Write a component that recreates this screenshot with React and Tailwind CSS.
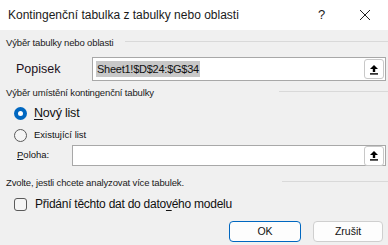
import React from 'react'

function PickButton(){
  return (
    <div className="w-[20px] h-[20px] bg-white border border-[#c8c8c8] rounded-[3px] flex items-center justify-center">
      <svg width="10" height="11" viewBox="0 0 10 11">
        <path d="M5 1 L9 5 H6.2 V8 H3.8 V5 H1 Z" fill="#000" />
        <rect x="1" y="9.2" width="8" height="1.4" fill="#000" />
      </svg>
    </div>
  )
}

function SectionLabel({text, lineStart}){
  return (
    <div className="relative h-[12px] flex items-center">
      <span className="text-[9.5px] leading-[12px] tracking-[-0.15px] text-[#1a1a1a] pl-[6px]">{text}</span>
      <div className="absolute right-0 top-[4px] h-px bg-[#d9d9d9]" style={{left: lineStart}} />
    </div>
  )
}

export default function App(){
  return (
    <div className="w-[388px] h-[245px] bg-[#f0f0f0] overflow-hidden relative" style={{fontFamily:'"Liberation Sans", Arial, sans-serif'}}>
      <div className="h-[30px] bg-white flex items-center pl-[8px] text-[#1a1a1a]">
        <span className="text-[12px] flex-1">Kontingenční tabulka z tabulky nebo oblasti</span>
        <span className="text-[13px] w-[10px] mr-[31px]">?</span>
        <svg width="12" height="12" viewBox="0 0 12 12" className="mr-[17px]">
          <path d="M1 1 L11 11 M11 1 L1 11" stroke="#222" strokeWidth="1" />
        </svg>
      </div>

      <div className="mt-[7px]">
        <SectionLabel text="Výběr tabulky nebo oblasti" lineStart={125} />
      </div>

      <div className="mt-[8px] flex items-center h-[24px]">
        <span className="pl-[16px] w-[92px] text-[12.5px] text-[#1c1020]">Popisek</span>
        <div className="flex-1 mr-[2px] h-[24px] bg-white border border-[#a8a8a8] flex items-center pl-[3px] pr-[1px]">
          <span className="bg-[#c8c8c8] text-[11px] tracking-[-0.25px] leading-[16px] text-[#111] px-px flex-none">Sheet1!$D$24:$G$34</span>
          <div className="flex-1" />
          <PickButton />
        </div>
      </div>

      <div className="mt-[6px]">
        <SectionLabel text="Výběr umístění kontingenční tabulky" lineStart={279} />
      </div>

      <div className="mt-[6px] flex items-center h-[16px] pl-[14px]">
        <div className="w-[13px] h-[13px] rounded-full bg-[#0067c0] flex items-center justify-center">
          <div className="w-[5px] h-[5px] rounded-full bg-white" />
        </div>
        <span className="ml-[7px] text-[12.5px] tracking-[-0.2px] text-[#111]"><span className="underline underline-offset-2">N</span>ový list</span>
      </div>

      <div className="mt-[6px] flex items-center h-[16px] pl-[14px]">
        <div className="w-[13px] h-[13px] rounded-full border border-[#5a5a5a] bg-[#f5f5f5]" />
        <span className="ml-[7px] text-[9.5px] text-[#111]">Existující list</span>
      </div>

      <div className="mt-[2px] flex items-center h-[21px]">
        <span className="pl-[17px] w-[72px] text-[9.5px] text-[#111]"><span className="underline">P</span>oloha:</span>
        <div className="flex-1 mr-[2px] h-[21px] bg-white border border-[#a8a8a8] flex items-center justify-end pr-[1px]">
          <PickButton />
        </div>
      </div>

      <div className="mt-[11px]">
        <SectionLabel text="Zvolte, jestli chcete analyzovat více tabulek." lineStart={282} />
      </div>

      <div className="mt-[7px] flex items-center h-[16px] pl-[14px]">
        <div className="w-[13px] h-[13px] rounded-[3px] border border-[#5a5a5a] bg-[#f5f5f5]" />
        <span className="ml-[8px] text-[12px] tracking-[-0.25px] text-[#111]">Přidání těchto dat do dato<span className="underline underline-offset-2">v</span>ého modelu</span>
      </div>

      <div className="mt-[9px] flex justify-end pr-[5px] gap-[12px]">
        <button className="w-[72px] h-[21px] bg-[#fdfdfd] border border-[#0067c0] rounded-[4px] text-[10.5px] text-[#111]">OK</button>
        <button className="w-[70px] h-[21px] bg-[#fdfdfd] border border-[#cfcfcf] rounded-[4px] text-[10.5px] text-[#111]">Zrušit</button>
      </div>
    </div>
  )
}
